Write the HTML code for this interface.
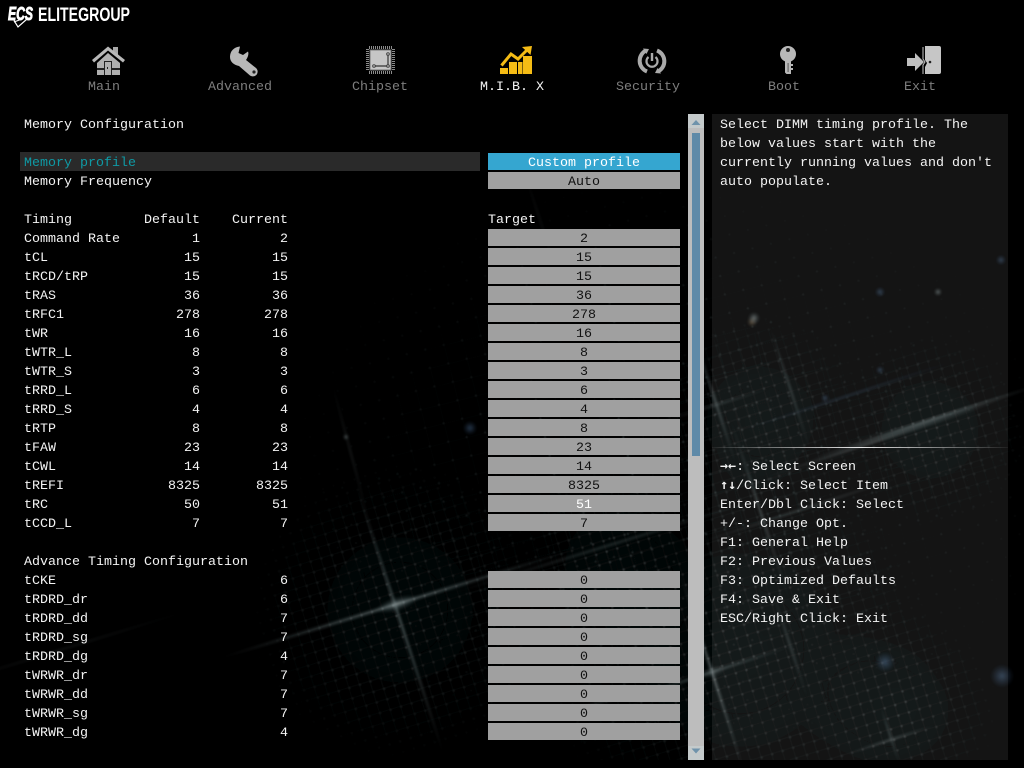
<!DOCTYPE html>
<html>
<head>
<meta charset="utf-8">
<style>
html,body{margin:0;padding:0;background:#000;}
body{width:1024px;height:768px;overflow:hidden;position:relative;font-family:"Liberation Mono",monospace;font-size:13.33px;color:#f4f4f4;}
#bg,#ico,#logo{position:absolute;left:0;top:0;}
.t{position:absolute;line-height:19px;height:19px;white-space:pre;margin-top:1px;}
.r{text-align:right;width:80px;}
.b{position:absolute;left:488px;width:192px;height:17px;line-height:21px;background:#a0a0a0;color:#111;text-align:center;white-space:pre;}
.n{position:absolute;top:78px;line-height:19px;width:120px;text-align:center;color:#7e7e7e;white-space:pre;}
#panel{position:absolute;left:712px;top:114px;width:296px;height:646px;background:rgba(255,255,255,.08);}
#hl{position:absolute;left:20px;top:152px;width:460px;height:19px;background:#2a2a2a;}
#sb{position:absolute;left:688px;top:114px;width:16px;height:646px;background:#bdbdbd;}
#th{position:absolute;left:692px;top:133px;width:8px;height:323px;background:#5f8aa8;}
#line{position:absolute;left:712px;top:447px;width:296px;height:1px;background:linear-gradient(90deg,rgba(255,255,255,.05),#e8e8e8 50%,rgba(255,255,255,.05));}
.a{font-weight:bold;font-family:"DejaVu Sans Mono",monospace;line-height:0;}
</style>
</head>
<body>
<svg id="bg" width="1024" height="760" viewBox="0 0 1024 760">
<defs>
<radialGradient id="w"><stop offset="0" stop-color="#b8c4c4" stop-opacity=".6"/><stop offset=".55" stop-color="#8fa3a6" stop-opacity=".25"/><stop offset="1" stop-color="#8fa3a6" stop-opacity="0"/></radialGradient>
<radialGradient id="u"><stop offset="0" stop-color="#5d86b4" stop-opacity=".5"/><stop offset="1" stop-color="#3b5f8c" stop-opacity="0"/></radialGradient>
<radialGradient id="o"><stop offset="0" stop-color="#a88a62" stop-opacity=".6"/><stop offset="1" stop-color="#77664f" stop-opacity="0"/></radialGradient>
<radialGradient id="fade"><stop offset="0" stop-color="#fff" stop-opacity=".8"/><stop offset=".6" stop-color="#fff" stop-opacity=".35"/><stop offset="1" stop-color="#fff" stop-opacity="0"/></radialGradient>
<pattern id="dots" width="11" height="11" patternUnits="userSpaceOnUse" patternTransform="rotate(-17)"><rect width="11" height="11" fill="#16282a" fill-opacity=".2"/><rect x="0" width="11" height="1" fill="#6c8284" fill-opacity=".1"/><rect y="0" width="1" height="11" fill="#6c8284" fill-opacity=".1"/><circle cx="1" cy="1" r="1.1" fill="#9fb2b4" fill-opacity=".3"/></pattern>
<pattern id="dots2" width="19" height="19" patternUnits="userSpaceOnUse" patternTransform="rotate(-14)"><circle cx="5" cy="5" r="1" fill="#87a0a4" fill-opacity=".35"/><rect y="5" width="19" height="1" fill="#5b7478" fill-opacity=".07"/><rect x="5" width="1" height="19" fill="#5b7478" fill-opacity=".07"/></pattern>
<mask id="m1"><circle cx="400" cy="610" r="150" fill="url(#fade)"/><circle cx="740" cy="650" r="200" fill="url(#fade)"/><circle cx="760" cy="420" r="110" fill="url(#fade)"/><circle cx="930" cy="430" r="100" fill="url(#fade)"/><circle cx="610" cy="560" r="90" fill="url(#fade)"/><circle cx="900" cy="710" r="100" fill="url(#fade)"/></mask>
<mask id="m2"><rect width="1024" height="760" fill="#000"/><ellipse cx="680" cy="470" rx="400" ry="300" fill="url(#fade)"/></mask>
<filter id="s" x="-10%" y="-10%" width="120%" height="120%"><feGaussianBlur stdDeviation="1.2"/></filter>
<filter id="p" x="0" y="0" width="100%" height="100%"><feGaussianBlur stdDeviation=".6"/></filter>
</defs>
<rect width="1024" height="760" fill="#000"/>
<g filter="url(#p)">
<rect x="0" y="100" width="1024" height="660" fill="url(#dots2)" mask="url(#m2)"/>
<rect x="0" y="100" width="1024" height="660" fill="url(#dots)" mask="url(#m1)"/>
</g>
<g filter="url(#s)" opacity=".85">
<ellipse cx="397" cy="604" rx="190" ry="2.5" transform="rotate(-17 397 604)" fill="url(#w)"/>
<ellipse cx="400" cy="620" rx="145" ry="2" transform="rotate(72 400 620)" fill="url(#w)"/>
<ellipse cx="397" cy="604" rx="22" ry="7" transform="rotate(-17 397 604)" fill="url(#w)"/>
<ellipse cx="610" cy="545" rx="180" ry="2" transform="rotate(-17 610 545)" fill="url(#w)" opacity=".5"/>
<ellipse cx="715" cy="400" rx="70" ry="2" transform="rotate(72 715 400)" fill="url(#w)" opacity=".8"/>
<ellipse cx="716" cy="405" rx="60" ry="1.8" transform="rotate(-17 716 405)" fill="url(#w)" opacity=".5"/>
<ellipse cx="790" cy="388" rx="70" ry="1.8" transform="rotate(72 790 388)" fill="url(#w)" opacity=".6"/>
<ellipse cx="925" cy="422" rx="125" ry="2.5" transform="rotate(-18 925 422)" fill="url(#w)"/>
<ellipse cx="880" cy="440" rx="130" ry="2" transform="rotate(-18 880 440)" fill="url(#w)" opacity=".8"/>
<ellipse cx="850" cy="395" rx="120" ry="1.6" transform="rotate(-18 850 395)" fill="url(#u)" opacity=".7"/>
<ellipse cx="712" cy="672" rx="110" ry="2.2" transform="rotate(72 712 672)" fill="url(#w)"/>
<ellipse cx="712" cy="672" rx="90" ry="2" transform="rotate(-18 712 672)" fill="url(#w)" opacity=".8"/>
<ellipse cx="712" cy="672" rx="14" ry="6" transform="rotate(-18 712 672)" fill="url(#w)" opacity=".5"/>
<ellipse cx="790" cy="645" rx="60" ry="1.8" transform="rotate(72 790 645)" fill="url(#w)" opacity=".6"/>
<ellipse cx="760" cy="510" rx="100" ry="2" transform="rotate(72 760 510)" fill="url(#w)" opacity=".7"/>
<ellipse cx="800" cy="510" rx="120" ry="1.8" transform="rotate(-18 800 510)" fill="url(#w)" opacity=".55"/>
<ellipse cx="890" cy="740" rx="50" ry="1.8" transform="rotate(-18 890 740)" fill="url(#w)" opacity=".7"/>
<ellipse cx="890" cy="735" rx="32" ry="1.6" transform="rotate(72 890 735)" fill="url(#w)" opacity=".7"/>
<ellipse cx="610" cy="700" rx="120" ry="1.6" transform="rotate(-14 610 700)" fill="url(#w)" opacity=".4"/>
<ellipse cx="350" cy="450" rx="75" ry="1.5" transform="rotate(75 350 450)" fill="url(#w)" opacity=".35"/>
<ellipse cx="60" cy="650" rx="150" ry="1.6" transform="rotate(-17 60 650)" fill="url(#w)" opacity=".25"/>
<ellipse cx="540" cy="220" rx="60" ry="1.5" transform="rotate(72 540 220)" fill="url(#w)" opacity=".2"/>
<circle cx="470" cy="428" r="7" fill="url(#u)"/>
<circle cx="752" cy="322" r="5" fill="url(#o)"/>
<circle cx="754" cy="318" r="6" fill="url(#w)"/>
<circle cx="880" cy="292" r="5" fill="url(#u)"/>
<circle cx="938" cy="292" r="4" fill="url(#w)"/>
<circle cx="1001" cy="260" r="5" fill="url(#u)"/>
<circle cx="885" cy="662" r="10" fill="url(#u)"/>
<circle cx="1002" cy="676" r="12" fill="url(#u)"/>
<circle cx="346" cy="437" r="3" fill="url(#w)"/>
<circle cx="825" cy="398" r="4" fill="url(#u)"/>
<circle cx="880" cy="370" r="4" fill="url(#u)"/>
</g>
</svg>

<div id="panel"></div>
<div id="hl"></div>
<div id="sb"></div>
<div id="th"></div>
<div id="line"></div>

<svg id="ico" width="1024" height="110" viewBox="0 0 1024 110">
<!-- home -->
<path d="M113 47h5v8l-5-4z" fill="#a9a9a9"/>
<path d="M92 60 108 46.500 125 60 123 62.500 108 50.500 94 62.500z" fill="#b8b8b8"/>
<path d="M108 53 120 63V75H97V63z" fill="#b0b0b0"/>
<rect x="97" y="68" width="23" height="2" fill="#222"/>
<rect x="104" y="61" width="8" height="14" fill="#222"/>
<rect x="105" y="62" width="6" height="13" fill="#b0b0b0"/>
<rect x="107" y="67" width="1" height="2" fill="#222"/>
<!-- wrench -->
<path d="M240 46.500C234 47 230 51 230 57C230 62 234 65 239 66L250 75.500C253 77.500 257 76 257.500 72.500C258 70.500 257 69 256 68L246 60C248 57 249 54 248 51.500L243 55 238.500 53z" fill="#b8b8b8"/>
<circle cx="254" cy="72" r="1.600" fill="#222"/>
<!-- chipset -->
<rect x="366" y="46" width="29" height="28" fill="#000"/>
<path d="M369 47.500H392M369 72.500H392" stroke="#8b8b8b" stroke-width="3" stroke-dasharray="1 1"/>
<path d="M367.500 49V71M393.500 49V71" stroke="#8b8b8b" stroke-width="3" stroke-dasharray="1 1"/>
<rect x="370" y="50" width="21" height="20" fill="#c6c6c6" stroke="#777" stroke-width="1"/>
<path d="M388 54V66H374" fill="none" stroke="#333" stroke-width="1.200"/>
<circle cx="388" cy="54" r="1.500" fill="#888" stroke="#333" stroke-width=".6"/>
<circle cx="388" cy="66" r="1.500" fill="#888" stroke="#333" stroke-width=".6"/>
<circle cx="374" cy="66" r="1.500" fill="#888" stroke="#333" stroke-width=".6"/>
<!-- MIB -->
<rect x="500" y="68" width="8" height="6" fill="#f5bc15"/>
<rect x="509" y="62" width="8" height="12" fill="#f5bc15"/>
<rect x="518" y="62" width="4.500" height="12" fill="#f5bc15"/>
<rect x="523" y="56" width="9" height="18" fill="#f5bc15"/>
<path d="M501.500 65.500 511 54 518 59 527 50" fill="none" stroke="#f5bc15" stroke-width="3"/>
<path d="M522 47 532 46 530.500 55z" fill="#f5bc15"/>
<!-- security -->
<path d="M646 50.500A11.500 11.500 0 0 0 647 71.500" fill="none" stroke="#aaa" stroke-width="4"/>
<path d="M658 71.500A11.500 11.500 0 0 0 657 50.500" fill="none" stroke="#aaa" stroke-width="4"/>
<path d="M643 48.500l6 .5-2.500 5zM661 73.500l-6-.5 2.500-5z" fill="#aaa"/>
<path d="M648.500 57A5.500 5.500 0 1 0 655.500 57" fill="none" stroke="#aaa" stroke-width="2.200"/>
<rect x="650.800" y="53" width="2.400" height="8" fill="#aaa"/>
<!-- key -->
<circle cx="788" cy="54" r="8" fill="#b8b8b8"/>
<circle cx="788" cy="50" r="2" fill="#222"/>
<path d="M785 60h6v14h-4.500L785 72.500zM791 64h2v2h-2zM791 68h2v2h-2z" fill="#b8b8b8"/>
<rect x="787.500" y="63" width="1.200" height="9" fill="#666"/>
<!-- exit -->
<path d="M925 46H939a2 2 0 0 1 2 2V72a2 2 0 0 1-2 2H925V67l2-4-2-3z" fill="#c6c6c6"/>
<path d="M923 47v12l2 3-2 3v9" fill="none" stroke="#c6c6c6" stroke-width="1"/>
<circle cx="930" cy="62" r="1.300" fill="#222"/>
<path d="M907 58h8v-5l9 9-9 9v-5h-8z" fill="#c0c0c0"/>
</svg>

<svg style="position:absolute;left:688px;top:114px" width="16" height="646" viewBox="0 0 16 646">
<rect x="0" y="0" width="16" height="14" fill="#c4cacb"/>
<path d="M8 6 12.500 11H3.500z" fill="#6f93ab"/>
<rect x="0" y="632" width="16" height="14" fill="#c4cacb"/>
<path d="M3.500 634.500H12.500L8 639.500z" fill="#6f93ab"/>
</svg>

<svg id="logo" width="140" height="32" viewBox="0 0 140 32">
<text x="8" y="20" font-family="Liberation Sans" font-weight="bold" font-style="italic" font-size="18" fill="#fff" stroke="#fff" stroke-width=".9" textLength="25" lengthAdjust="spacingAndGlyphs">ECS</text>
<path d="M14 20.500 18 27 27 19 M14 22 22 19" fill="none" stroke="#fff" stroke-width="1.200"/>
<text x="38" y="21" font-family="Liberation Sans" font-weight="bold" font-size="19.500" fill="#fff" textLength="92" lengthAdjust="spacingAndGlyphs">ELITEGROUP</text>
</svg>

<div class="n" style="left:44px">Main</div>
<div class="n" style="left:180px">Advanced</div>
<div class="n" style="left:320px">Chipset</div>
<div class="n" style="left:452px;color:#f4f4f4">M.I.B. X</div>
<div class="n" style="left:588px">Security</div>
<div class="n" style="left:724px">Boot</div>
<div class="n" style="left:860px">Exit</div>

<div class="t" style="left:24px;top:115px">Memory Configuration</div>
<div class="t" style="left:24px;top:153px;color:#0f9aa5">Memory profile</div>
<div class="b" style="top:153px;background:#35a6d0;color:#fff">Custom profile</div>
<div class="t" style="left:24px;top:172px">Memory Frequency</div>
<div class="b" style="top:172px">Auto</div>
<div class="t" style="left:24px;top:210px">Timing</div>
<div class="t r" style="left:120px;top:210px">Default</div>
<div class="t r" style="left:208px;top:210px">Current</div>
<div class="t" style="left:488px;top:210px">Target</div>

<div class="t" style="left:24px;top:229px">Command Rate</div><div class="t r" style="left:120px;top:229px">1</div><div class="t r" style="left:208px;top:229px">2</div><div class="b" style="top:229px">2</div>
<div class="t" style="left:24px;top:248px">tCL</div><div class="t r" style="left:120px;top:248px">15</div><div class="t r" style="left:208px;top:248px">15</div><div class="b" style="top:248px">15</div>
<div class="t" style="left:24px;top:267px">tRCD/tRP</div><div class="t r" style="left:120px;top:267px">15</div><div class="t r" style="left:208px;top:267px">15</div><div class="b" style="top:267px">15</div>
<div class="t" style="left:24px;top:286px">tRAS</div><div class="t r" style="left:120px;top:286px">36</div><div class="t r" style="left:208px;top:286px">36</div><div class="b" style="top:286px">36</div>
<div class="t" style="left:24px;top:305px">tRFC1</div><div class="t r" style="left:120px;top:305px">278</div><div class="t r" style="left:208px;top:305px">278</div><div class="b" style="top:305px">278</div>
<div class="t" style="left:24px;top:324px">tWR</div><div class="t r" style="left:120px;top:324px">16</div><div class="t r" style="left:208px;top:324px">16</div><div class="b" style="top:324px">16</div>
<div class="t" style="left:24px;top:343px">tWTR_L</div><div class="t r" style="left:120px;top:343px">8</div><div class="t r" style="left:208px;top:343px">8</div><div class="b" style="top:343px">8</div>
<div class="t" style="left:24px;top:362px">tWTR_S</div><div class="t r" style="left:120px;top:362px">3</div><div class="t r" style="left:208px;top:362px">3</div><div class="b" style="top:362px">3</div>
<div class="t" style="left:24px;top:381px">tRRD_L</div><div class="t r" style="left:120px;top:381px">6</div><div class="t r" style="left:208px;top:381px">6</div><div class="b" style="top:381px">6</div>
<div class="t" style="left:24px;top:400px">tRRD_S</div><div class="t r" style="left:120px;top:400px">4</div><div class="t r" style="left:208px;top:400px">4</div><div class="b" style="top:400px">4</div>
<div class="t" style="left:24px;top:419px">tRTP</div><div class="t r" style="left:120px;top:419px">8</div><div class="t r" style="left:208px;top:419px">8</div><div class="b" style="top:419px">8</div>
<div class="t" style="left:24px;top:438px">tFAW</div><div class="t r" style="left:120px;top:438px">23</div><div class="t r" style="left:208px;top:438px">23</div><div class="b" style="top:438px">23</div>
<div class="t" style="left:24px;top:457px">tCWL</div><div class="t r" style="left:120px;top:457px">14</div><div class="t r" style="left:208px;top:457px">14</div><div class="b" style="top:457px">14</div>
<div class="t" style="left:24px;top:476px">tREFI</div><div class="t r" style="left:120px;top:476px">8325</div><div class="t r" style="left:208px;top:476px">8325</div><div class="b" style="top:476px">8325</div>
<div class="t" style="left:24px;top:495px">tRC</div><div class="t r" style="left:120px;top:495px">50</div><div class="t r" style="left:208px;top:495px">51</div><div class="b" style="top:495px;color:#fff">51</div>
<div class="t" style="left:24px;top:514px">tCCD_L</div><div class="t r" style="left:120px;top:514px">7</div><div class="t r" style="left:208px;top:514px">7</div><div class="b" style="top:514px">7</div>

<div class="t" style="left:24px;top:552px">Advance Timing Configuration</div>
<div class="t" style="left:24px;top:571px">tCKE</div><div class="t r" style="left:208px;top:571px">6</div><div class="b" style="top:571px">0</div>
<div class="t" style="left:24px;top:590px">tRDRD_dr</div><div class="t r" style="left:208px;top:590px">6</div><div class="b" style="top:590px">0</div>
<div class="t" style="left:24px;top:609px">tRDRD_dd</div><div class="t r" style="left:208px;top:609px">7</div><div class="b" style="top:609px">0</div>
<div class="t" style="left:24px;top:628px">tRDRD_sg</div><div class="t r" style="left:208px;top:628px">7</div><div class="b" style="top:628px">0</div>
<div class="t" style="left:24px;top:647px">tRDRD_dg</div><div class="t r" style="left:208px;top:647px">4</div><div class="b" style="top:647px">0</div>
<div class="t" style="left:24px;top:666px">tWRWR_dr</div><div class="t r" style="left:208px;top:666px">7</div><div class="b" style="top:666px">0</div>
<div class="t" style="left:24px;top:685px">tWRWR_dd</div><div class="t r" style="left:208px;top:685px">7</div><div class="b" style="top:685px">0</div>
<div class="t" style="left:24px;top:704px">tWRWR_sg</div><div class="t r" style="left:208px;top:704px">7</div><div class="b" style="top:704px">0</div>
<div class="t" style="left:24px;top:723px">tWRWR_dg</div><div class="t r" style="left:208px;top:723px">4</div><div class="b" style="top:723px">0</div>

<div class="t" style="left:720px;top:115px">Select DIMM timing profile. The</div>
<div class="t" style="left:720px;top:134px">below values start with the</div>
<div class="t" style="left:720px;top:153px">currently running values and don't</div>
<div class="t" style="left:720px;top:172px">auto populate.</div>

<div class="t" style="left:720px;top:457px"><span class="a">→←</span>: Select Screen</div>
<div class="t" style="left:720px;top:476px"><span class="a">↑↓</span>/Click: Select Item</div>
<div class="t" style="left:720px;top:495px">Enter/Dbl Click: Select</div>
<div class="t" style="left:720px;top:514px">+/-: Change Opt.</div>
<div class="t" style="left:720px;top:533px">F1: General Help</div>
<div class="t" style="left:720px;top:552px">F2: Previous Values</div>
<div class="t" style="left:720px;top:571px">F3: Optimized Defaults</div>
<div class="t" style="left:720px;top:590px">F4: Save &amp; Exit</div>
<div class="t" style="left:720px;top:609px">ESC/Right Click: Exit</div>
</body>
</html>
